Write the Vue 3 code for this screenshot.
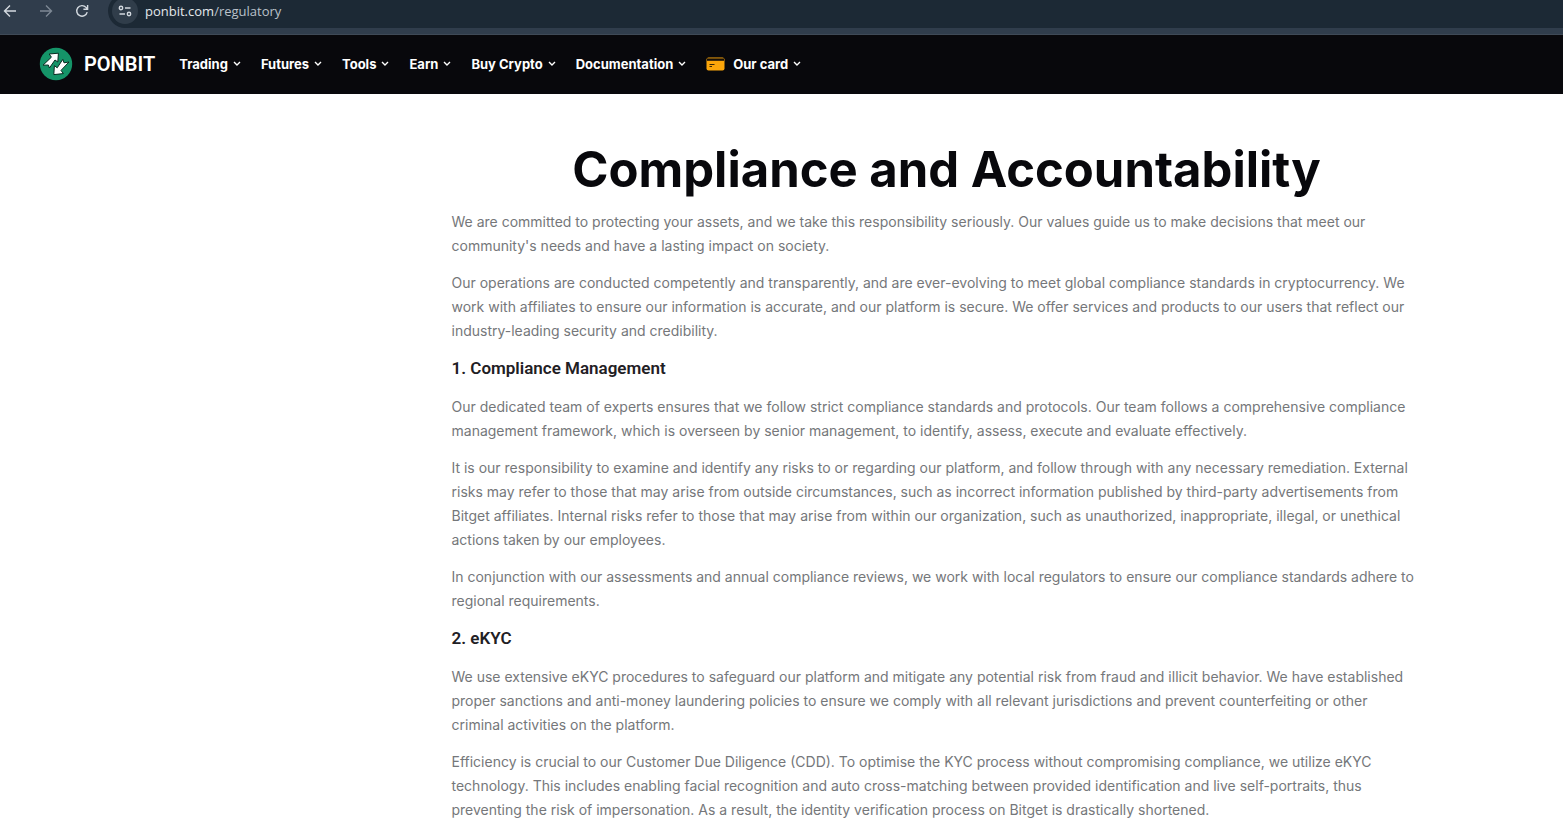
<template>
  <div class="page">
    <div class="browser-bar">
      <div class="history">
        <button class="nav-btn" aria-label="Back">
          <svg width="16" height="16" viewBox="0 0 16 16"><path d="M14 8H3M8 2.5L2.5 8L8 13.5" /></svg>
        </button>
        <button class="nav-btn dim" aria-label="Forward">
          <svg width="16" height="16" viewBox="0 0 16 16"><path d="M2 8H13M8 2.5L13.5 8L8 13.5" /></svg>
        </button>
        <button class="nav-btn" aria-label="Reload">
          <svg width="16" height="16" viewBox="0 0 16 16"><path d="M13.2 9.2A5.3 5.3 0 1 1 12 4.4L13.4 6M13.6 2V6.2H9.4" /></svg>
        </button>
      </div>
      <div class="address">
        <button class="site-info" aria-label="Site information">
          <svg width="14" height="14" viewBox="0 0 14 14">
            <circle cx="3" cy="4" r="1.7" /><path d="M7 4H12.5M1.5 10H7" /><circle cx="11" cy="10" r="1.7" />
          </svg>
        </button>
        <span class="url">ponbit.com<span class="path">/regulatory</span></span>
      </div>
    </div>

    <header class="site-header">
      <a href="#" class="brand">
        <svg width="34" height="34" viewBox="0 0 34 34">
          <circle cx="17" cy="17" r="16.2" fill="#159468" />
          <g fill="#fff" stroke="#082b20" stroke-width="1" stroke-linejoin="round">
            <path d="M4 18.2L12.4 10.2L10.2 7L19.4 6.2L18.8 15L16 13L10.4 21L9.4 18Z" />
            <path d="M30 15L22 23.4L24.4 26.6L14.8 27.6L15.4 18.6L18.2 20.8L23.8 12.4L25 15.8Z" />
          </g>
        </svg>
        <span>PONBIT</span>
      </a>
      <nav class="menu">
        <a v-for="item in menu" :key="item.label" href="#" class="menu-item">
          <svg v-if="item.card" class="card-icon" width="19" height="14" viewBox="0 0 19 14">
            <rect x="0.5" y="0.5" width="18" height="13" rx="2" fill="#fca60a" />
            <path d="M1 2.6H18" stroke="#16100a" stroke-width="2.4" />
            <path d="M3.5 7.5H8.5M3.5 9.5H6" stroke="#3a2708" stroke-width="1" />
          </svg>
          <span>{{ item.label }}</span>
          <svg class="chevron" width="8" height="6" viewBox="0 0 8 6"><path d="M1 1L4 4L7 1" /></svg>
        </a>
      </nav>
    </header>

    <main class="container">
      <article class="content">
        <h1>Compliance and Accountability</h1>
        <template v-for="(block, i) in blocks" :key="i">
          <h2 v-if="block.title">{{ block.title }}</h2>
          <p v-else>{{ block.text }}</p>
        </template>
      </article>
    </main>
  </div>
</template>

<script setup>
const menu = [
  { label: 'Trading' },
  { label: 'Futures' },
  { label: 'Tools' },
  { label: 'Earn' },
  { label: 'Buy Crypto' },
  { label: 'Documentation' },
  { label: 'Our card', card: true }
];

const blocks = [
  { text: "We are committed to protecting your assets, and we take this responsibility seriously. Our values guide us to make decisions that meet our community's needs and have a lasting impact on society." },
  { text: 'Our operations are conducted competently and transparently, and are ever-evolving to meet global compliance standards in cryptocurrency. We work with affiliates to ensure our information is accurate, and our platform is secure. We offer services and products to our users that reflect our industry-leading security and credibility.' },
  { title: '1. Compliance Management' },
  { text: 'Our dedicated team of experts ensures that we follow strict compliance standards and protocols. Our team follows a comprehensive compliance management framework, which is overseen by senior management, to identify, assess, execute and evaluate effectively.' },
  { text: 'It is our responsibility to examine and identify any risks to or regarding our platform, and follow through with any necessary remediation. External risks may refer to those that may arise from outside circumstances, such as incorrect information published by third-party advertisements from Bitget affiliates. Internal risks refer to those that may arise from within our organization, such as unauthorized, inappropriate, illegal, or unethical actions taken by our employees.' },
  { text: 'In conjunction with our assessments and annual compliance reviews, we work with local regulators to ensure our compliance standards adhere to regional requirements.' },
  { title: '2. eKYC' },
  { text: 'We use extensive eKYC procedures to safeguard our platform and mitigate any potential risk from fraud and illicit behavior. We have established proper sanctions and anti-money laundering policies to ensure we comply with all relevant jurisdictions and prevent counterfeiting or other criminal activities on the platform.' },
  { text: 'Efficiency is crucial to our Customer Due Diligence (CDD). To optimise the KYC process without compromising compliance, we utilize eKYC technology. This includes enabling facial recognition and auto cross-matching between provided identification and live self-portraits, thus preventing the risk of impersonation. As a result, the identity verification process on Bitget is drastically shortened.' }
];
</script>

<style>
body {
  background: #fff;
}
</style>

<style scoped>
.page {
  height: 100vh;
  overflow: hidden;
  font-family: Inter, sans-serif;
}

.browser-bar {
  display: flex;
  align-items: center;
  height: 35px;
  padding: 0 0 12px 2px;
  box-sizing: border-box;
  background: #303d4c;
  border-bottom: 1px solid #3f4a57;
}

.history {
  display: flex;
  gap: 20px;
  margin-right: 18px;
}

.nav-btn {
  display: flex;
  padding: 0;
  background: none;
  border: none;
  cursor: pointer;
}

.nav-btn svg {
  fill: none;
  stroke: #d3d9df;
  stroke-width: 1.4;
}

.nav-btn.dim svg {
  stroke: #7d8894;
}

.address {
  flex: 1;
  display: flex;
  align-items: center;
  gap: 7px;
  height: 34px;
  padding-left: 4px;
  background: #1c2935;
  border-radius: 17px 0 0 17px;
}

.site-info {
  display: flex;
  align-items: center;
  justify-content: center;
  width: 26px;
  height: 26px;
  padding: 0;
  background: #303d4a;
  border: none;
  border-radius: 50%;
}

.site-info svg {
  fill: none;
  stroke: #d3d9df;
  stroke-width: 1.4;
}

.url {
  font-family: "Open Sans", "Noto Sans", sans-serif;
  font-size: 13px;
  color: #e4e8ec;
}

.path {
  color: #b9c1c9;
}

.site-header {
  display: flex;
  align-items: center;
  height: 59px;
  padding: 0 39px 2px;
  box-sizing: border-box;
  background: #08080c;
}

.brand {
  display: flex;
  align-items: center;
  gap: 11px;
  margin-right: 24px;
  color: #fff;
  font-family: Roboto, sans-serif;
  font-size: 20px;
  font-weight: 600;
  text-decoration: none;
}

.menu {
  display: flex;
  align-items: center;
  gap: 20px;
}

.menu-item {
  display: flex;
  align-items: center;
  color: #fff;
  font-size: 13px;
  font-weight: 700;
  text-decoration: none;
}

.chevron {
  margin-left: 5px;
  fill: none;
  stroke: #fff;
  stroke-width: 1.4;
}

.card-icon {
  margin-right: 8px;
}

.container {
  max-width: 1320px;
  margin: 0 auto;
  padding-top: 46px;
}

.content {
  width: 75%;
  margin-left: auto;
}

h1 {
  margin: 0 0 10px;
  color: #08080c;
  font-size: 49px;
  font-weight: 700;
  line-height: 60px;
  text-align: center;
}

h2 {
  margin: 0 0 14px;
  color: #1f2024;
  font-family: Roboto, sans-serif;
  font-size: 17px;
  font-weight: 600;
  line-height: 25px;
}

p {
  margin: 0 0 13px;
  padding-right: 22px;
  color: #75777a;
  font-size: 14px;
  line-height: 24px;
}
</style>
